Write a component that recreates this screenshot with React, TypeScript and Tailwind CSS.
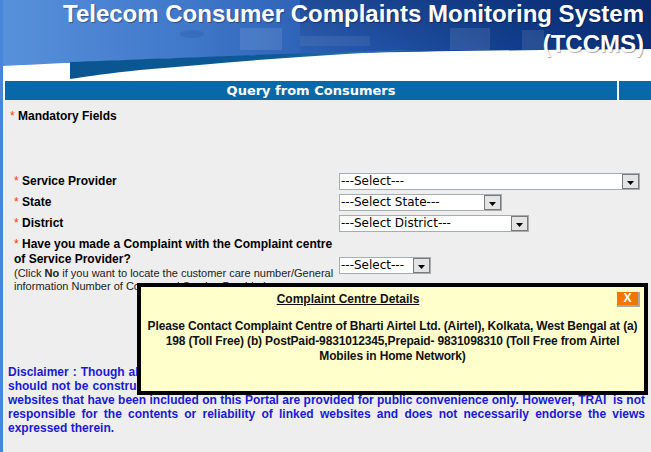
import React from 'react';

const disclaimerLines = [
  'Disclaimer : Though all efforts have been made to ensure the accuracy of the content on this Portal, the same',
  'should not be construed as a statement of law or used for any legal purposes whatsoever. Links to any other',
  'websites that have been included on this Portal are provided for public convenience only. However, TRAI\u00a0 is not',
  'responsible for the contents or reliability of linked websites and does not necessarily endorse the views',
  'expressed therein.',
];

function Header() {
  return (
    <div className="relative h-[81px]">
      <svg className="absolute inset-0 w-full h-full" viewBox="3 0 648 81" preserveAspectRatio="none">
        <defs>
          <linearGradient id="sky" x1="0" y1="0" x2="1" y2="0">
            <stop offset="0" stopColor="#5891db" />
            <stop offset="0.3" stopColor="#3f77c9" />
            <stop offset="0.55" stopColor="#2658ad" />
            <stop offset="0.8" stopColor="#113f8f" />
            <stop offset="1" stopColor="#0a2f76" />
          </linearGradient>
          <linearGradient id="shade" x1="0" y1="0" x2="0" y2="1">
            <stop offset="0" stopColor="#06215a" stopOpacity="0.35" />
            <stop offset="1" stopColor="#06215a" stopOpacity="0" />
          </linearGradient>
          <linearGradient id="swoosh" x1="0" y1="0" x2="1" y2="0">
            <stop offset="0" stopColor="#0a558f" />
            <stop offset="0.6" stopColor="#0d5a98" />
            <stop offset="1" stopColor="#3d7fbd" />
          </linearGradient>
        </defs>
        <rect x="0" y="0" width="651" height="81" fill="url(#sky)" />
        <rect x="300" y="0" width="351" height="60" fill="url(#shade)" />
        <rect x="240" y="28" width="42" height="22" fill="#ffffff" opacity="0.1" />
        <rect x="300" y="36" width="70" height="10" fill="#ffffff" opacity="0.07" />
        <rect x="450" y="28" width="40" height="22" fill="#ffffff" opacity="0.1" />
        <rect x="522" y="30" width="22" height="20" fill="#ffffff" opacity="0.1" />
        <ellipse cx="192" cy="34" rx="12" ry="4" fill="#0a2a60" opacity="0.12" />
        <path d="M3,66 C150,59 330,51 651,49 L651,81 L3,81 Z" fill="#ffffff" />
        <path d="M70,62 C150,59 260,54 420,50 C330,54 240,61 140,70 C110,73 90,76 70,79 Z" fill="url(#swoosh)" />
      </svg>
      <div className="relative flex flex-col items-end pr-[7px] pt-[2px] text-white font-bold text-[24px] leading-[24px] [text-shadow:1px_1px_1px_rgba(0,0,40,0.35)]">
        <div>Telecom Consumer Complaints Monitoring System</div>
        <div className="mt-[6px]">(TCCMS)</div>
      </div>
    </div>
  );
}

function SelectBox({ width, text }: { width: string; text: string }) {
  return (
    <div className={`${width} h-[17px] shrink-0 border border-[#a5acb2] bg-white flex items-center`}>
      <span className="flex-1 pl-[1px] text-[12px] leading-[15px] font-normal text-black font-['DejaVu_Sans',Verdana,sans-serif] whitespace-nowrap overflow-hidden">
        {text}
      </span>
      <div className="w-[17px] h-[15px] border border-[#7a7a7a] bg-[#e4e4e4] flex items-end justify-center pb-[3px]">
        <svg width="7" height="4" viewBox="0 0 7 4">
          <path d="M0,0 L7,0 L3.5,4 Z" fill="#000" />
        </svg>
      </div>
    </div>
  );
}

function Star() {
  return <span className="text-[#ff3a00] font-normal">*</span>;
}

export default function App() {
  return (
    <div className="relative w-[651px] h-[452px] overflow-hidden bg-[#eeeeee] border-l-[3px] border-[#4a86d8] font-['Liberation_Sans',Arial,sans-serif]">
      <Header />

      <div className="flex gap-[2px] pl-[2px] bg-white h-[19px]">
        <div className="w-[612px] bg-[#0868a8] text-center text-white font-bold text-[13px] leading-[19px] font-['DejaVu_Sans',Verdana,sans-serif]">
          Query from Consumers
        </div>
        <div className="flex-1 bg-[#0868a8]" />
      </div>

      <div className="pl-[7px] mt-[9px] text-[12px] leading-[15px] font-bold text-black">
        <Star /> Mandatory Fields
      </div>

      <div className="pl-[11px] mt-[49px] text-[12px] font-bold text-black">
        <div className="flex items-center h-[17px]">
          <div className="w-[325px] leading-[15px]">
            <Star /> Service Provider
          </div>
          <SelectBox width="w-[301px]" text="---Select---" />
        </div>
        <div className="flex items-center h-[17px] mt-[4px]">
          <div className="w-[325px] leading-[15px]">
            <Star /> State
          </div>
          <SelectBox width="w-[163px]" text="---Select State---" />
        </div>
        <div className="flex items-center h-[17px] mt-[4px]">
          <div className="w-[325px] leading-[15px]">
            <Star /> District
          </div>
          <SelectBox width="w-[190px]" text="---Select District---" />
        </div>
        <div className="flex items-center mt-[5px]">
          <div className="w-[325px]">
            <div className="leading-[15px]">
              <Star /> Have you made a Complaint with the Complaint centre of Service Provider?
            </div>
            <div className="text-[11px] leading-[13px] font-normal text-[#222]">
              (Click <b>No</b> if you want to locate the customer care number/General information Number of Concerned Service Provider)
            </div>
          </div>
          <SelectBox width="w-[92px]" text="---Select---" />
        </div>
      </div>

      <div className="mt-[72px] pl-[5px] w-[642px] text-[12px] leading-[14px] font-bold text-[#1a1ad6]">
        {disclaimerLines.map((line, i) => (
          <div
            key={i}
            className={i < disclaimerLines.length - 1 ? 'text-justify [text-align-last:justify]' : 'text-left'}
          >
            {line}
          </div>
        ))}
      </div>

      <div className="absolute left-[134px] top-[283px] w-[511px] h-[112px] border-4 border-black bg-[#ffffcc] text-[12px] font-bold text-[#111]">
        <div className="flex items-start pt-[5px]">
          <div className="w-[414px] text-center leading-[15px] underline">Complaint Centre Details</div>
          <div className="flex-1 flex justify-end pr-[4px]">
            <div className="w-[23px] h-[15px] bg-[#f07800] border-r-2 border-b-2 border-[#a8a8a8] text-white text-[12px] leading-[13px] text-center">
              X
            </div>
          </div>
        </div>
        <div className="mt-[12px] px-[2px] text-center leading-[15px] tracking-[-0.15px]">
          Please Contact Complaint Centre of Bharti Airtel Ltd. (Airtel), Kolkata, West Bengal at (a) 198 (Toll Free) (b) PostPaid-9831012345,Prepaid- 9831098310 (Toll Free from Airtel Mobiles in Home Network)
        </div>
      </div>
    </div>
  );
}
